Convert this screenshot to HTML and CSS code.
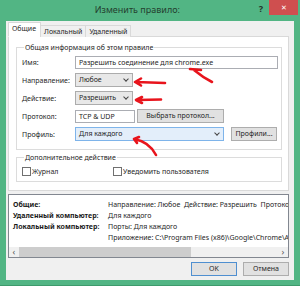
FILE: index.html
```html
<!DOCTYPE html>
<html lang="ru">
<head>
    <meta charset="UTF-8">
    <title>Изменить правило</title>
    <link rel="stylesheet" href="styles.css">
</head>
<body>
    <div class="window">
        <div class="titlebar">
            <span class="title">Изменить правило:</span>
            <span class="help">?</span>
            <span class="close">&#x2715;</span>
        </div>

        <div class="client">
            <div class="tabs">
                <span class="tab active">Общие</span>
                <span class="tab">Локальный</span>
                <span class="tab">Удаленный</span>
            </div>

            <div class="panel">
                <fieldset class="group">
                    <legend>Общая информация об этом правиле</legend>
                    <div class="form">
                        <label>Имя:</label>
                        <div class="field"><div class="textbox name-box">Разрешить соединение для chrome.exe</div></div>

                        <label>Направление:</label>
                        <div class="field"><div class="combo short">Любое<span class="caret"></span></div></div>

                        <label>Действие:</label>
                        <div class="field"><div class="combo short">Разрешить<span class="caret"></span></div></div>

                        <label>Протокол:</label>
                        <div class="field">
                            <div class="textbox proto-box">TCP &amp; UDP</div>
                            <div class="btn proto-btn">Выбрать протокол...</div>
                        </div>

                        <label>Профиль:</label>
                        <div class="field">
                            <div class="combo profile-box">Для каждого<span class="caret"></span></div>
                            <div class="btn profile-btn">Профили...</div>
                        </div>
                    </div>
                </fieldset>

                <fieldset class="group extra">
                    <legend>Дополнительное действие</legend>
                    <div class="checks">
                        <span class="check"><span class="box"></span>Журнал</span>
                        <span class="check"><span class="box"></span>Уведомить пользователя</span>
                    </div>
                </fieldset>
            </div>

            <div class="summary">
                <div class="rows">
                    <div class="row"><b>Общие:</b><span>Направление: Любое&nbsp; Действие: Разрешить&nbsp; Протокол: TCP &amp; UDP</span></div>
                    <div class="row"><b>Удаленный компьютер:</b><span>Для каждого</span></div>
                    <div class="row"><b>Локальный компьютер:</b><span>Порты: Для каждого</span></div>
                    <div class="row"><b></b><span>Приложение: C:\Program Files (x86)\Google\Chrome\Application\chrome.exe</span></div>
                </div>
                <div class="hscroll">
                    <span class="arrow">&lsaquo;</span>
                    <span class="track"><span class="thumb"></span></span>
                    <span class="arrow">&rsaquo;</span>
                </div>
            </div>

            <div class="actions">
                <div class="btn default">OK</div>
                <div class="btn">Отмена</div>
            </div>
        </div>
    </div>

    <svg class="marks" width="300" height="286" viewBox="0 0 300 286">
        <g fill="none" stroke="#e8141c" stroke-width="2.6" stroke-linecap="round" stroke-linejoin="round">
            <path d="M190,69 L201,70 M194,70 C200,75 206,79 212,82"/>
            <path d="M136,82 L165,83 M141,78.5 L135,82 L141,85.5"/>
            <path d="M137,100 L161,99.5 M142,97 L136,100 L142,103"/>
            <path d="M134,139 C145,141 152,147 156,155 M134,139 L139,137 M134,139 L137,143"/>
        </g>
    </svg>
</body>
</html>
```

FILE: styles.css
```css
body {
    margin: 0;
    width: 300px;
    height: 286px;
    overflow: hidden;
    position: relative;
    background-color: #52b584;
    font-family: "Noto Sans", "Open Sans", sans-serif;
    font-size: 7px;
    color: #262626;
}
.window {
    display: flex;
    flex-direction: column;
    height: 286px;
    box-sizing: border-box;
    padding: 0 6px 5px 6px;
    border-bottom: 1px solid #3e9a6c;
}
.titlebar {
    height: 21px;
    display: flex;
    align-items: center;
    position: relative;
}
.title {
    flex: 1;
    text-align: center;
    font-size: 9px;
    color: #24402f;
    padding-left: 10px;
    padding-bottom: 2px;
}
.help {
    font-size: 9px;
    font-weight: bold;
    color: #22362a;
    margin-right: 6px;
    margin-bottom: 4px;
}
.close {
    width: 29px;
    height: 15px;
    align-self: flex-start;
    margin-right: -4px;
    background-color: #cf4f4f;
    color: #fff;
    font-size: 7px;
    text-align: center;
    line-height: 15px;
}
.client {
    flex: 1;
    background-color: #f0f0f0;
    display: flex;
    flex-direction: column;
    padding: 3px 5px 0 2px;
}
.tabs {
    display: flex;
    align-items: flex-end;
    height: 13px;
    margin-bottom: -1px;
    position: relative;
    z-index: 1;
}
.tab {
    height: 11px;
    line-height: 11px;
    padding: 0 3px;
    border: 1px solid #d9d9d9;
    border-bottom: none;
    background-color: #f0f0f0;
    margin-left: -1px;
}
.tab:first-child {
    margin-left: 0;
}
.tab.active {
    height: 13px;
    line-height: 12px;
    background-color: #fff;
    padding: 0 4px 0 3px;
    border-bottom: 1px solid #fff;
}
.panel {
    height: 155px;
    box-sizing: border-box;
    border: 1px solid #d9d9d9;
    background-color: #fff;
    padding: 6px 6px 0 7px;
}
.group {
    margin: 0;
    padding: 3px 3px 8px 5px;
    border: 1px solid #dcdcdc;
}
.group legend {
    padding: 0 1px;
    margin-left: 2px;
    line-height: 9px;
}
.form {
    display: grid;
    grid-template-columns: 53px 1fr;
    grid-auto-rows: 14px;
    row-gap: 4px;
    align-items: center;
}
.field {
    display: flex;
    align-items: center;
    gap: 2px;
    height: 14px;
}
.textbox, .combo {
    height: 13px;
    box-sizing: border-box;
    line-height: 11px;
    padding: 0 3px;
    border: 1px solid #abadb3;
    background-color: #fff;
    white-space: nowrap;
    overflow: hidden;
}
.name-box {
    width: 203px;
}
.proto-box {
    width: 60px;
}
.combo {
    height: 14px;
    line-height: 12px;
    background-color: #e8e8e8;
    border-color: #acacac;
    position: relative;
}
.combo.short {
    width: 58px;
}
.profile-box {
    width: 149px;
    background-color: #e3eefa;
    border-color: #7eb4ea;
}
.caret {
    position: absolute;
    right: 4px;
    top: 3px;
    width: 3px;
    height: 3px;
    border-right: 1px solid #444;
    border-bottom: 1px solid #444;
    transform: rotate(45deg);
}
.btn {
    height: 14px;
    box-sizing: border-box;
    line-height: 12px;
    border: 1px solid #adadad;
    background-color: #e1e1e1;
    text-align: center;
    white-space: nowrap;
}
.proto-btn {
    width: 87px;
}
.profile-btn {
    width: 46px;
    margin-left: 5px;
}
.extra {
    margin-top: 3px;
    padding: 5px 3px 5px 5px;
}
.checks {
    display: flex;
    height: 9px;
    align-items: center;
}
.check {
    display: flex;
    align-items: center;
    white-space: nowrap;
}
.check:first-child {
    width: 91px;
}
.check .box {
    width: 7px;
    height: 7px;
    border: 1px solid #707070;
    background-color: #fff;
    margin-right: 1px;
}
.summary {
    margin-top: 3px;
    height: 64px;
    box-sizing: border-box;
    border: 1px solid #828790;
    background-color: #fff;
    display: flex;
    flex-direction: column;
    overflow: hidden;
}
.rows {
    padding: 4px 0 0 4px;
    flex: 1;
    overflow: hidden;
}
.row {
    display: flex;
    height: 11px;
    line-height: 11px;
    white-space: nowrap;
}
.row b {
    width: 95px;
    flex-shrink: 0;
    color: #1a1a1a;
}
.hscroll {
    height: 10px;
    display: flex;
    align-items: center;
    background-color: #f0f0f0;
    color: #555;
    font-size: 9px;
}
.arrow {
    width: 10px;
    text-align: center;
    line-height: 10px;
}
.track {
    flex: 1;
    height: 10px;
    display: flex;
}
.thumb {
    width: 172px;
    background-color: #cdcdcd;
}
.actions {
    display: flex;
    justify-content: flex-end;
    gap: 6px;
    padding: 4px 0 0 0;
}
.actions .btn {
    width: 46px;
}
.btn.default {
    border-color: #4f8fd0;
}
.marks {
    position: absolute;
    top: 0;
    left: 0;
    pointer-events: none;
}
```
